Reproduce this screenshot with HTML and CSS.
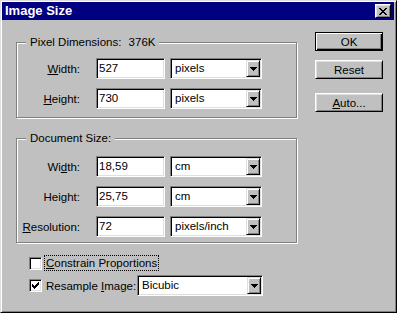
FILE: index.html
```html
<!DOCTYPE html>
<html lang="en">
  <head>
    <meta charset="UTF-8" />
    <title>Image Size</title>
    <link rel="stylesheet" href="styles.css">
  </head>

  <body>
    <div class="window">
      <div class="titlebar">
        <span class="title">Image Size</span>
        <span class="close">
          <svg width="8" height="7" viewBox="0 0 8 7" shape-rendering="crispEdges">
            <path d="M0 0h2v1h-2z M6 0h2v1h-2z M1 1h2v1h-2z M5 1h2v1h-2z M2 2h4v1h-4z M3 3h2v1h-2z M2 4h4v1h-4z M1 5h2v1h-2z M5 5h2v1h-2z M0 6h2v1h-2z M6 6h2v1h-2z" fill="#000" />
          </svg>
        </span>
      </div>

      <div class="content">
        <div class="main">
          <div class="group group-pixels">
            <div class="group-title">Pixel Dimensions: <span class="size">376K</span></div>
            <div class="rows">
              <div class="row">
                <span class="label"><u>W</u>idth:</span>
                <span class="field">527</span>
                <span class="select"><span class="select-value">pixels</span><span class="select-btn"><svg width="7" height="4" viewBox="0 0 7 4" shape-rendering="crispEdges"><path d="M0 0h7v1h-7z M1 1h5v1h-5z M2 2h3v1h-3z M3 3h1v1h-1z" fill="#000" /></svg></span></span>
              </div>
              <div class="row">
                <span class="label"><u>H</u>eight:</span>
                <span class="field">730</span>
                <span class="select"><span class="select-value">pixels</span><span class="select-btn"><svg width="7" height="4" viewBox="0 0 7 4" shape-rendering="crispEdges"><path d="M0 0h7v1h-7z M1 1h5v1h-5z M2 2h3v1h-3z M3 3h1v1h-1z" fill="#000" /></svg></span></span>
              </div>
            </div>
          </div>

          <div class="group group-doc">
            <div class="group-title">Document Size:</div>
            <div class="rows">
              <div class="row">
                <span class="label">Wi<u>d</u>th:</span>
                <span class="field">18,59</span>
                <span class="select"><span class="select-value">cm</span><span class="select-btn"><svg width="7" height="4" viewBox="0 0 7 4" shape-rendering="crispEdges"><path d="M0 0h7v1h-7z M1 1h5v1h-5z M2 2h3v1h-3z M3 3h1v1h-1z" fill="#000" /></svg></span></span>
              </div>
              <div class="row">
                <span class="label">Hei<u>g</u>ht:</span>
                <span class="field">25,75</span>
                <span class="select"><span class="select-value">cm</span><span class="select-btn"><svg width="7" height="4" viewBox="0 0 7 4" shape-rendering="crispEdges"><path d="M0 0h7v1h-7z M1 1h5v1h-5z M2 2h3v1h-3z M3 3h1v1h-1z" fill="#000" /></svg></span></span>
              </div>
              <div class="row">
                <span class="label"><u>R</u>esolution:</span>
                <span class="field">72</span>
                <span class="select"><span class="select-value">pixels/inch</span><span class="select-btn"><svg width="7" height="4" viewBox="0 0 7 4" shape-rendering="crispEdges"><path d="M0 0h7v1h-7z M1 1h5v1h-5z M2 2h3v1h-3z M3 3h1v1h-1z" fill="#000" /></svg></span></span>
              </div>
            </div>
          </div>

          <div class="checks">
            <div class="check-row">
              <span class="checkbox"></span>
              <span class="check-label focused"><u>C</u>onstrain Proportions</span>
            </div>
            <div class="check-row check-row-select">
              <span class="checkbox">
                <svg width="7" height="7" viewBox="0 0 7 7" shape-rendering="crispEdges">
                  <path d="M6 0h1v1h-1z M5 1h2v1h-2z M0 2h1v1h-1z M4 2h3v1h-3z M0 3h2v1h-2z M3 3h3v1h-3z M0 4h5v1h-5z M1 5h3v1h-3z M2 6h1v1h-1z" fill="#000" />
                </svg>
              </span>
              <span class="check-label resample-label">Resample <u>I</u>mage:</span>
              <span class="select select-wide"><span class="select-value">Bicubic</span><span class="select-btn"><svg width="7" height="4" viewBox="0 0 7 4" shape-rendering="crispEdges"><path d="M0 0h7v1h-7z M1 1h5v1h-5z M2 2h3v1h-3z M3 3h1v1h-1z" fill="#000" /></svg></span></span>
            </div>
          </div>
        </div>

        <div class="buttons">
          <span class="btn btn-default">OK</span>
          <span class="btn btn-reset">Reset</span>
          <span class="btn btn-auto"><u>A</u>uto...</span>
        </div>
      </div>
    </div>
  </body>
</html>
```

FILE: styles.css
```css
* {
  box-sizing: border-box;
}

body {
  margin: 0;
  background: #c0c0c0;
  font-family: "Liberation Sans", Arial, sans-serif;
  font-size: 11.5px;
  line-height: 14px;
  color: #000;
}

u {
  text-underline-offset: 1px;
}

.window {
  width: 397px;
  height: 313px;
  padding: 1px 2px 2px 1px;
  border: 1px solid;
  border-color: #dfdfdf #000 #000 #dfdfdf;
  box-shadow: inset 1px 1px #fff, inset -1px -1px #808080;
  background: #c0c0c0;
}

.titlebar {
  display: flex;
  align-items: center;
  height: 18px;
  padding: 0 3px 0 3px;
  background: #000080;
  color: #fff;
  font-weight: bold;
  font-size: 13px;
}

.close {
  display: flex;
  justify-content: center;
  align-items: center;
  width: 16px;
  height: 14px;
  margin-left: auto;
  border: 1px solid;
  border-color: #fff #000 #000 #fff;
  box-shadow: inset 1px 1px #dfdfdf, inset -1px -1px #808080;
  background: #c0c0c0;
}

.content {
  display: flex;
  padding-left: 14px;
}

.main {
  width: 281px;
}

/* etched group boxes */
.group {
  border: 1px solid #808080;
  box-shadow: 1px 1px 0 #fff, inset 1px 1px 0 #fff;
}

.group-pixels {
  margin-top: 22px;
  padding-bottom: 8px;
}

.group-doc {
  margin-top: 20px;
  padding-bottom: 5px;
}

.group-title {
  width: fit-content;
  margin: -8px 0 0 9px;
  padding: 0 4px;
  background: #c0c0c0;
}

.size {
  margin-left: 4px;
}

.rows {
  display: flex;
  flex-direction: column;
  gap: 9px;
}

.group-pixels .rows {
  margin-top: 9px;
}

.group-doc .rows {
  margin-top: 11px;
}

.row {
  display: flex;
  align-items: center;
  height: 21px;
}

.label {
  width: 63px;
  margin-right: 16px;
  text-align: right;
  white-space: nowrap;
}

.field,
.select,
.checkbox {
  border: 1px solid;
  border-color: #808080 #fff #fff #808080;
  box-shadow: inset 1px 1px #000, inset -1px -1px #dfdfdf;
  background: #fff;
}

.field {
  display: flex;
  align-items: center;
  width: 69px;
  height: 21px;
  padding: 0 0 1px 2px;
}

.select {
  display: flex;
  align-items: center;
  width: 92px;
  height: 21px;
  margin-left: 5px;
  padding: 1px;
}

.select-value {
  padding: 0 0 1px 3px;
  white-space: nowrap;
}

.select-btn {
  display: flex;
  justify-content: center;
  align-items: center;
  width: 14px;
  height: 17px;
  margin-left: auto;
  border: 1px solid;
  border-color: #dfdfdf #000 #000 #dfdfdf;
  box-shadow: inset 1px 1px #fff, inset -1px -1px #808080;
  background: #c0c0c0;
}

.checks {
  display: flex;
  flex-direction: column;
  gap: 4px;
  margin-top: 12px;
  padding-left: 13px;
}

.check-row {
  display: flex;
  align-items: center;
  height: 16px;
}

.check-row-select {
  height: 21px;
}

.checkbox {
  display: flex;
  justify-content: center;
  align-items: center;
  flex: none;
  width: 13px;
  height: 13px;
  margin-right: 2px;
}

.check-label {
  padding: 1px 2px;
  white-space: nowrap;
}

.focused {
  outline: 1px dotted #000;
  outline-offset: -1px;
}

.resample-label {
  flex: none;
  width: 93px;
}

.select-wide {
  flex: none;
  width: 126px;
  margin-left: 0;
}

.buttons {
  display: flex;
  flex-direction: column;
  margin-left: 18px;
  padding-top: 12px;
}

.btn {
  display: flex;
  justify-content: center;
  align-items: center;
  width: 68px;
  height: 19px;
  border: 1px solid;
  border-color: #fff #000 #000 #fff;
  box-shadow: inset 1px 1px #dfdfdf, inset -1px -1px #808080;
}

.btn-default {
  border-color: #000;
  box-shadow: inset 1px 1px #fff, inset -1px -1px #000, inset -2px -2px #808080;
}

.btn-reset {
  margin-top: 9px;
}

.btn-auto {
  margin-top: 14px;
}
```
